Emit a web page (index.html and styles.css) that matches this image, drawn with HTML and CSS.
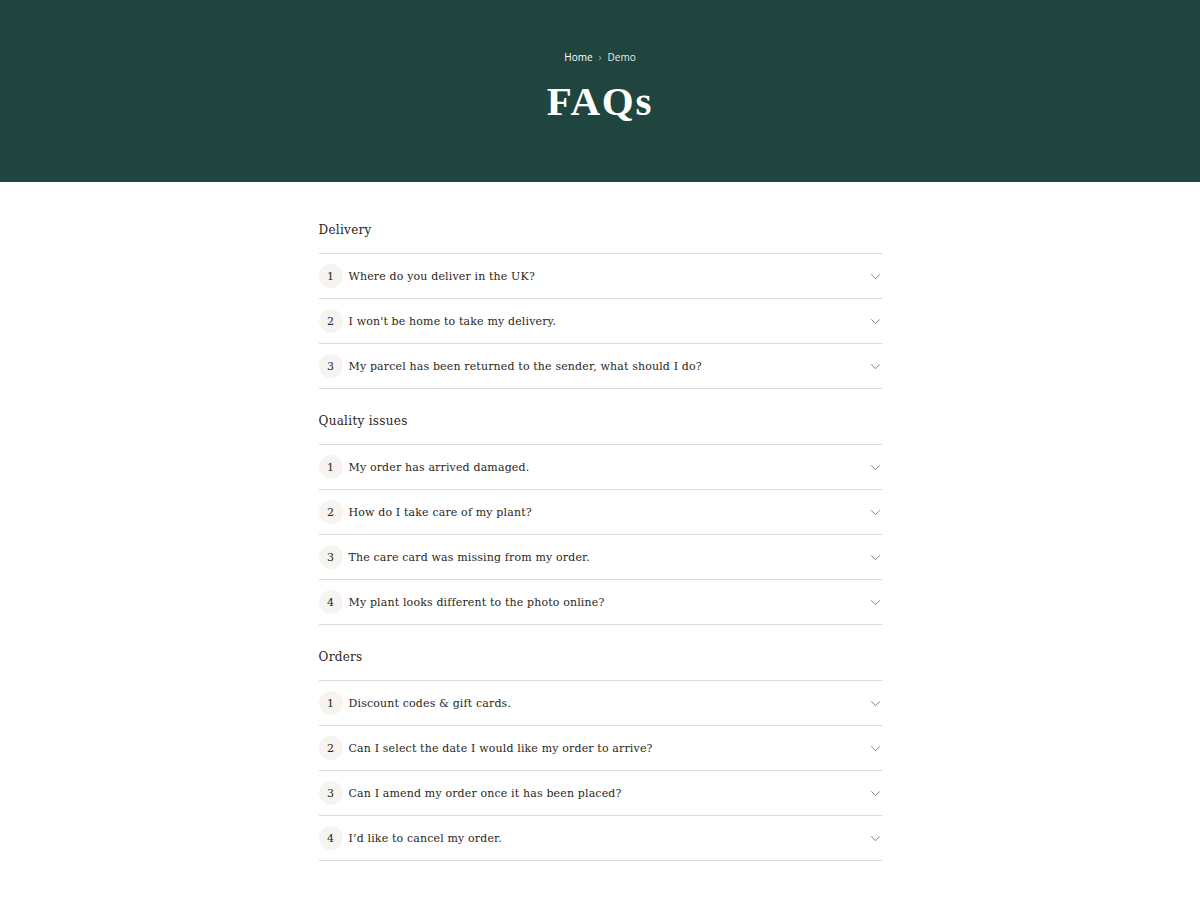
FILE: index.html
```html
<!DOCTYPE html>
<html lang="en">
<head>
<meta charset="utf-8">
<title>FAQs</title>
<link rel="stylesheet" href="styles.css">
</head>
<body>
<header class="hero">
  <nav class="crumbs"><a href="#">Home</a><span class="sep">&#8250;</span><span>Demo</span></nav>
  <h1 class="title">FAQs</h1>
</header>
<main class="faq">
  <section class="group">
    <h2 class="group-title">Delivery</h2>
    <ul class="list">
      <li class="item"><span class="num">1</span><span class="q">Where do you deliver in the UK?</span><svg class="chev" viewBox="0 0 12 8"><path d="M1 1.5l5 5 5-5"/></svg></li>
      <li class="item"><span class="num">2</span><span class="q">I won't be home to take my delivery.</span><svg class="chev" viewBox="0 0 12 8"><path d="M1 1.5l5 5 5-5"/></svg></li>
      <li class="item"><span class="num">3</span><span class="q">My parcel has been returned to the sender, what should I do?</span><svg class="chev" viewBox="0 0 12 8"><path d="M1 1.5l5 5 5-5"/></svg></li>
    </ul>
  </section>
  <section class="group">
    <h2 class="group-title">Quality issues</h2>
    <ul class="list">
      <li class="item"><span class="num">1</span><span class="q">My order has arrived damaged.</span><svg class="chev" viewBox="0 0 12 8"><path d="M1 1.5l5 5 5-5"/></svg></li>
      <li class="item"><span class="num">2</span><span class="q">How do I take care of my plant?</span><svg class="chev" viewBox="0 0 12 8"><path d="M1 1.5l5 5 5-5"/></svg></li>
      <li class="item"><span class="num">3</span><span class="q">The care card was missing from my order.</span><svg class="chev" viewBox="0 0 12 8"><path d="M1 1.5l5 5 5-5"/></svg></li>
      <li class="item"><span class="num">4</span><span class="q">My plant looks different to the photo online?</span><svg class="chev" viewBox="0 0 12 8"><path d="M1 1.5l5 5 5-5"/></svg></li>
    </ul>
  </section>
  <section class="group">
    <h2 class="group-title">Orders</h2>
    <ul class="list">
      <li class="item"><span class="num">1</span><span class="q">Discount codes &amp; gift cards.</span><svg class="chev" viewBox="0 0 12 8"><path d="M1 1.5l5 5 5-5"/></svg></li>
      <li class="item"><span class="num">2</span><span class="q">Can I select the date I would like my order to arrive?</span><svg class="chev" viewBox="0 0 12 8"><path d="M1 1.5l5 5 5-5"/></svg></li>
      <li class="item"><span class="num">3</span><span class="q">Can I amend my order once it has been placed?</span><svg class="chev" viewBox="0 0 12 8"><path d="M1 1.5l5 5 5-5"/></svg></li>
      <li class="item"><span class="num">4</span><span class="q">I’d like to cancel my order.</span><svg class="chev" viewBox="0 0 12 8"><path d="M1 1.5l5 5 5-5"/></svg></li>
    </ul>
  </section>
</main>
</body>
</html>
```
FILE: styles.css
```css
* { box-sizing: border-box; }

body {
  margin: 0;
  background: #fff;
  color: #2b2620;
  font-family: "DejaVu Serif", "Liberation Serif", serif;
}

.hero {
  background: #20453e;
  height: 182px;
  display: flex;
  flex-direction: column;
  align-items: center;
  padding-top: 51px;
  color: #fff;
}

.crumbs {
  font-family: "Open Sans", "Liberation Sans", sans-serif;
  font-size: 10px;
  line-height: 13px;
  display: flex;
  gap: 6px;
  color: #e4ebe8;
}
.crumbs a { color: #fff; text-decoration: none; }
.crumbs .sep { color: #9fb3ad; }

.title {
  margin: 12px 0 0;
  font-family: "Liberation Serif", serif;
  font-weight: 700;
  font-size: 41px;
  line-height: 50px;
  letter-spacing: 1.8px;
}

.faq {
  width: 563px;
  margin: 0 auto;
  padding-top: 38px;
  padding-bottom: 40px;
}

.group + .group { margin-top: 22px; }

.group-title {
  margin: 0;
  font-size: 12px;
  font-weight: 400;
  letter-spacing: 0.3px;
  line-height: 20px;
  padding-bottom: 13px;
  border-bottom: 1px solid #dcdcdc;
}

.list { list-style: none; margin: 0; padding: 0; }

.item {
  height: 45px;
  display: flex;
  align-items: center;
  border-bottom: 1px solid #dcdcdc;
  font-size: 11px;
  letter-spacing: 0.15px;
}

.num {
  width: 24px;
  height: 24px;
  border-radius: 50%;
  background: #f5f4f0;
  display: flex;
  align-items: center;
  justify-content: center;
  flex: none;
  margin-right: 6px;
}

.q { flex: 1; }

.chev {
  width: 11px;
  height: 7px;
  margin-right: 1px;
  fill: none;
  stroke: #6f6f6f;
  stroke-width: 1;
}
```
